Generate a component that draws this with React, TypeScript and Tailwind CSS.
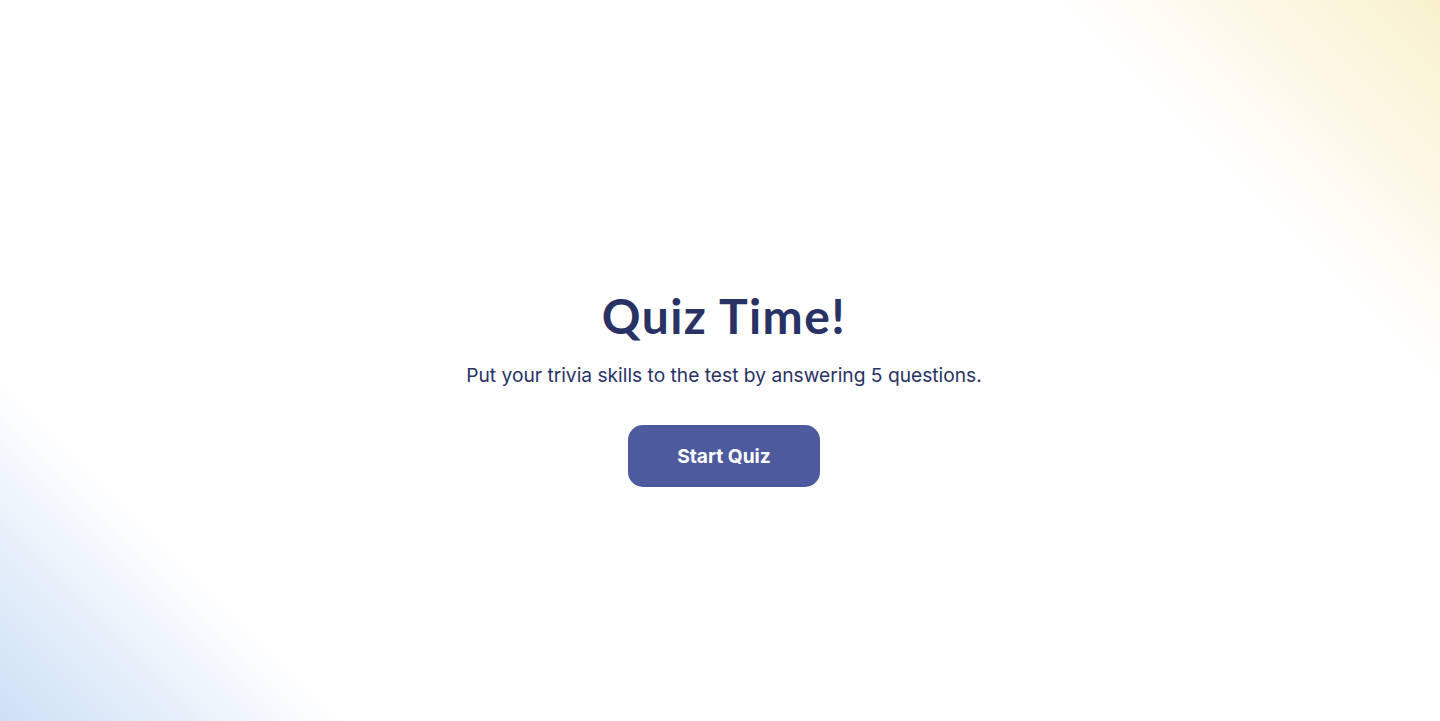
import React from 'react'

const App = () => {
  return (
    <div className="min-h-screen w-full bg-white bg-[linear-gradient(45deg,#cde0f5_0%,rgba(205,224,245,0.6)_7%,rgba(205,224,245,0)_16%),linear-gradient(225deg,#f9f1cc_0%,rgba(249,241,204,0.55)_8%,rgba(249,241,204,0)_18%)] font-['Inter',sans-serif]">
      <main className="flex flex-col items-center pt-[288px] pl-[8px]">
        <h1 className="text-[48px] leading-[56px] font-bold tracking-[0.03em] text-[#293264] font-['Lato',sans-serif]">
          Quiz Time!
        </h1>
        <p className="mt-[19px] text-[19.2px] leading-[24px] text-[#293264]">
          Put your trivia skills to the test by answering 5 questions.
        </p>
        <button className="mt-[38px] w-[192px] h-[62px] rounded-[15px] bg-[#4d5b9e] text-white text-[19.2px] font-bold">
          Start Quiz
        </button>
      </main>
    </div>
  )
}

export default App
